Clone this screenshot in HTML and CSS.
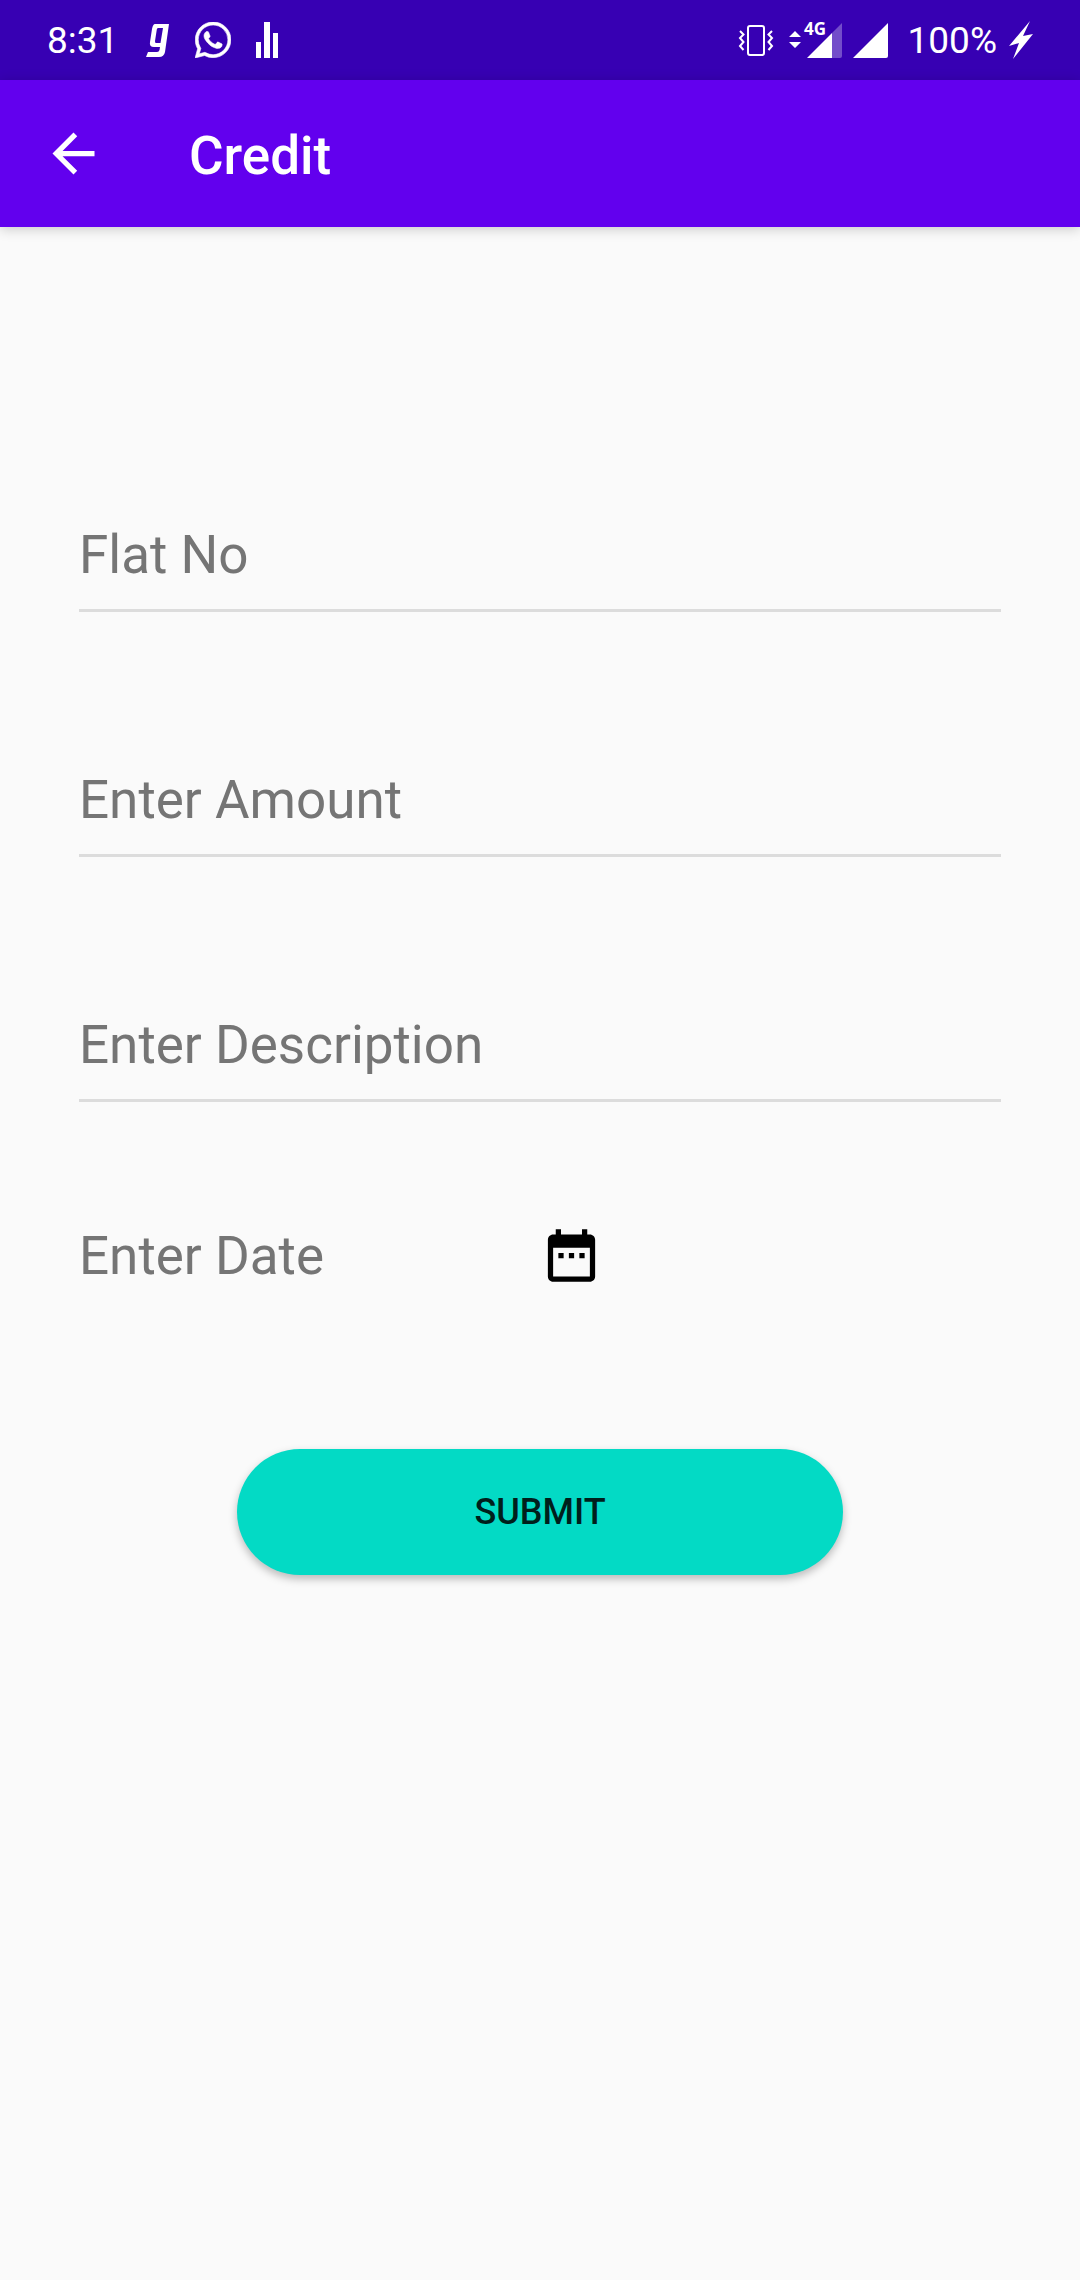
FILE: index.html
```html
<!DOCTYPE html>
<html lang="en">
<head>
<meta charset="utf-8">
<meta name="viewport" content="width=device-width, initial-scale=1">
<title>Credit</title>
<link rel="stylesheet" href="styles.css">
</head>
<body>
<div class="status-bar">
  <div class="status-group notifications">
    <span class="clock">8:31</span>
    <svg width="24" height="36" viewBox="0 0 24 36" aria-hidden="true"><path fill="#fff" fill-rule="evenodd" d="M9 2H23L19 30Q18 35 13 35H0L2 30H11Q13 30 13.500 28L14 25H8Q3 25 4 20L6 7Q7 2 9 2ZM12 6Q11 6 10.800 7.500L9 19Q8.800 21 10 21H14.500L17 6Z"/></svg>
    <svg width="36" height="36" viewBox="0 0 24 24" aria-hidden="true"><path fill="#fff" stroke="#fff" stroke-width=".4" d="M17.472 14.382c-.297-.149-1.758-.867-2.03-.967-.273-.099-.471-.148-.67.15-.197.297-.767.966-.94 1.164-.173.199-.347.223-.644.075-.297-.15-1.255-.463-2.39-1.475-.883-.788-1.48-1.761-1.653-2.059-.173-.297-.018-.458.13-.606.134-.133.298-.347.446-.52.149-.174.198-.298.298-.497.099-.198.05-.371-.025-.52-.075-.149-.669-1.612-.916-2.207-.242-.579-.487-.5-.669-.51-.173-.008-.371-.01-.57-.01-.198 0-.52.074-.792.372-.272.297-1.04 1.016-1.04 2.479 0 1.462 1.065 2.875 1.213 3.074.149.198 2.096 3.2 5.077 4.487.709.306 1.262.489 1.694.625.712.227 1.36.195 1.871.118.571-.085 1.758-.719 2.006-1.413.248-.694.248-1.289.173-1.413-.074-.124-.272-.198-.57-.347m-5.421 7.403h-.004a9.87 9.87 0 01-5.031-1.378l-.361-.214-3.741.982.998-3.648-.235-.374a9.86 9.86 0 01-1.51-5.26c.001-5.45 4.436-9.884 9.888-9.884 2.64 0 5.122 1.03 6.988 2.898a9.825 9.825 0 012.893 6.994c-.003 5.45-4.437 9.884-9.885 9.884m8.413-18.297A11.815 11.815 0 0012.05 0C5.495 0 .16 5.335.157 11.892c0 2.096.547 4.142 1.588 5.945L.057 24l6.305-1.654a11.882 11.882 0 005.683 1.448h.005c6.554 0 11.89-5.335 11.893-11.893a11.821 11.821 0 00-3.48-8.413z"/></svg>
    <svg width="22" height="36" viewBox="0 0 22 36" aria-hidden="true"><path fill="#fff" d="M0 20h5v16H0zM8 0h6v36H8zM17 11h5v25h-5z"/></svg>
  </div>
  <div class="status-group system">
    <svg class="vibrate" width="36" height="36" viewBox="0 0 36 36" fill="none" stroke="#fff" stroke-width="2" aria-hidden="true"><rect x="10" y="4" width="16" height="29" rx="2"/><path d="M2 9L5.500 12.500L2 16L5.500 20L2 24L5.500 28M34 9L30.500 12.500L34 16L30.500 20L34 24L30.500 28"/></svg>
    <svg width="54" height="44" viewBox="0 -4 54 44" fill="#fff" aria-hidden="true"><path d="M0 15L6 9L12 15ZM0 20H12L6 26Z"/><path fill-opacity=".3" d="M43 11L53 1V34Q53 36 51 36H43Z"/><path d="M18 36L43 11V36Z"/><text class="network" x="15" y="13">4G</text></svg>
    <svg width="35" height="36" viewBox="0 0 35 36" fill="#fff" aria-hidden="true"><path d="M0 36L35 1V34Q35 36 33 36Z"/></svg>
    <span class="battery">100%</span>
    <svg width="24" height="38" viewBox="0 0 24 38" fill="#fff" aria-hidden="true"><path d="M21 0L14 15L24 13L4 38L10 22L0 25Z"/></svg>
  </div>
</div>
<header class="app-bar">
  <button class="icon-button" type="button" aria-label="Back">
    <svg width="63" height="63" viewBox="0 0 24 24" fill="#fff" aria-hidden="true"><path d="M20 11H7.830l5.590-5.590L12 4l-8 8 8 8 1.410-1.410L7.830 13H20v-2z"/></svg>
  </button>
  <h1 class="title">Credit</h1>
</header>
<main>
  <form class="form">
    <input class="field" type="text" aria-label="Flat No" placeholder="Flat No">
    <input class="field" type="text" aria-label="Enter Amount" placeholder="Enter Amount">
    <input class="field" type="text" aria-label="Enter Description" placeholder="Enter Description">
    <div class="date-row">
      <input class="date" type="text" aria-label="Enter Date" placeholder="Enter Date">
      <button class="icon-button" type="button" aria-label="Choose date">
        <svg width="63" height="63" viewBox="0 0 24 24" aria-hidden="true"><path d="M9 11H7v2h2v-2zm4 0h-2v2h2v-2zm4 0h-2v2h2v-2zm2-7h-1V2h-2v2H8V2H6v2H5c-1.110 0-1.990.9-1.990 2L3 20c0 1.100.89 2 2 2h14c1.100 0 2-.9 2-2V6c0-1.100-.9-2-2-2zm0 16H5V9h14v11z"/></svg>
      </button>
    </div>
    <button class="submit" type="submit">SUBMIT</button>
  </form>
</main>
</body>
</html>
```
FILE: styles.css
```css
* {
  box-sizing: border-box;
}

body {
  margin: 0;
  min-height: 100vh;
  background: #fafafa;
  font-family: Roboto, "Liberation Sans", sans-serif;
}

svg {
  display: block;
  flex: none;
}

input,
button {
  margin: 0;
  padding: 0;
  border: 0;
  background: none;
  font-family: inherit;
}

.status-bar {
  display: flex;
  align-items: center;
  justify-content: space-between;
  height: 80px;
  padding: 0 47px;
  background: #3700b3;
  color: #fff;
  font-size: 37px;
}

.status-group {
  display: flex;
  align-items: center;
}

.notifications {
  gap: 25px;
}

.clock {
  margin-right: 3px;
}

.system {
  gap: 10px;
}

.vibrate {
  margin-right: 5px;
}

.battery {
  margin: 0 2px 0 10px;
}

.network {
  font: bold 17px "Noto Sans", sans-serif;
}

.app-bar {
  display: flex;
  align-items: center;
  gap: 84px;
  height: 147px;
  padding: 0 42px;
  background: #6200ee;
  box-shadow: 0 2px 12px rgba(0, 0, 0, 0.2);
}

.icon-button {
  cursor: pointer;
}

.title {
  margin: 0;
  padding-top: 4px;
  color: #fff;
  font-size: 53px;
  font-weight: 500;
}

.form {
  display: flex;
  flex-direction: column;
  padding: 265px 79px 0;
}

.field {
  width: 100%;
  height: 120px;
  margin-bottom: 125px;
  padding-top: 9px;
  border-bottom: 3px solid #dcdcdc;
}

.field:last-of-type {
  margin-bottom: 122px;
}

.field,
.date {
  color: #212121;
  font-size: 53px;
}

.field::placeholder,
.date::placeholder {
  color: #757575;
  opacity: 1;
}

.date-row {
  display: grid;
  grid-template-columns: 1fr 1fr;
  align-items: center;
  justify-items: start;
}

.date {
  width: 100%;
  height: 63px;
}

.submit {
  align-self: center;
  width: 606px;
  max-width: 100%;
  height: 126px;
  margin-top: 162px;
  border-radius: 63px;
  background: #03dac5;
  box-shadow: 0 4px 8px rgba(0, 0, 0, 0.26);
  color: #001f1c;
  font-size: 36px;
  font-weight: 500;
  cursor: pointer;
}
```
